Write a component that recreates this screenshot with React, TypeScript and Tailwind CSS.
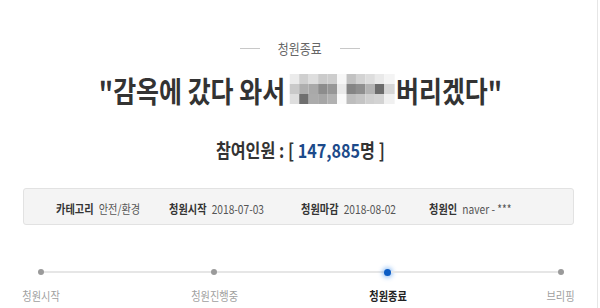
import React from 'react'

const mosaic = [
  ['#ebebeb', '#cfcfcf', '#dedede', '#cbcbcb', '#cdcdcd', '#f7f7f7', '#c2c2c2', '#d3d3d3', '#dddddd', '#e9e9e9', '#f4f4f4'],
  ['#c9c9c9', '#aeaeae', '#a9a9a9', '#8d8d8d', '#979797', '#eaeaea', '#858585', '#8f8f8f', '#b3b3b3', '#6c6c6c', '#d6d6d6'],
  ['#dedede', '#6f6f6f', '#ababab', '#a6a6a6', '#b1b1b1', '#fafafa', '#bdbdbd', '#c4c4c4', '#cfcfcf', '#d3d3d3', '#f0f0f0'],
]

const info = [
  { label: '카테고리', value: '안전/환경', w: 'w-[113px]' },
  { label: '청원시작', value: '2018-07-03', w: 'w-[132px]' },
  { label: '청원마감', value: '2018-08-02', w: 'w-[128px]' },
  { label: '청원인', value: 'naver - ***', w: 'w-[100px]' },
]

const steps = ['청원시작', '청원진행중', '청원종료', '브리핑']

function Dot({ active }: { active?: boolean }) {
  if (active) {
    return (
      <div className="w-[7px] h-[7px] rounded-full bg-[#0b5cc4] shadow-[0_0_4px_2px_rgba(60,140,235,0.45)] shrink-0" />
    )
  }
  return <div className="w-[6px] h-[6px] rounded-full bg-[#9a9a9a] shrink-0" />
}

export default function App() {
  return (
    <div className="w-[600px] h-[308px] bg-white flex overflow-hidden font-['Noto_Sans_CJK_KR',sans-serif]">
      <div className="w-[597px] pl-[3px] flex flex-col items-center">
        {/* status label */}
        <div className="mt-[38px] h-5 flex items-center gap-[14px]">
          <div className="w-[20px] h-px bg-[#c8c8c8]" />
          <span className="text-[14px] leading-5 text-[#666] scale-x-[0.85]">청원종료</span>
          <div className="w-[20px] h-px bg-[#c8c8c8]" />
        </div>

        {/* title */}
        <div className="mt-[14px] h-9 flex items-center scale-x-[0.86] text-[29px] leading-9 font-bold text-[#333]">
          <span>"감옥에 갔다 와서</span>
          <div className="ml-[5px] mr-[2px] grid grid-cols-11 w-[122px] -mt-[2px]">
            {mosaic.flat().map((c, i) => (
              <div key={i} className="h-[10px]" style={{ backgroundColor: c }} />
            ))}
          </div>
          <span>버리겠다"</span>
        </div>

        {/* count */}
        <div className="mt-[30px] h-6 text-[19px] leading-6 font-bold text-[#333] scale-x-[0.85] whitespace-pre">
          참여인원 : [ <span className="text-[#1c4a8a]">147,885</span>명 ]
        </div>

        {/* info box */}
        <div className="self-start ml-[20px] mt-[26px] w-[551px] h-[37px] border border-[#e2e2e2] bg-[#f4f4f4] rounded-[3px] flex items-center pl-[32px]">
          {info.map((it) => (
            <div key={it.label} className={`${it.w} shrink-0`}>
              <div className="inline-flex items-baseline gap-[6px] origin-left scale-x-[0.85] text-[12px] leading-4 whitespace-nowrap">
                <span className="font-bold text-[#333]">{it.label}</span>
                <span className="text-[#555]">{it.value}</span>
              </div>
            </div>
          ))}
        </div>

        {/* progress */}
        <div className="self-start ml-[8px] mt-[42px] w-[580px] flex flex-col">
          <div className="px-[27px] h-[10px] flex items-center">
            <Dot />
            <div className="flex-1 h-[2px] bg-[#e6e6e6]" />
            <Dot />
            <div className="flex-1 h-[2px] bg-[#e6e6e6]" />
            <Dot active />
            <div className="flex-1 h-[2px] bg-[#e6e6e6]" />
            <Dot />
          </div>
          <div className="mt-[11px] flex justify-between">
            {steps.map((s, i) => (
              <div key={s} className="w-[60px] flex justify-center">
                <span
                  className={
                    i === 2
                      ? 'text-[12px] leading-4 font-bold text-[#222] scale-x-[0.85] whitespace-nowrap'
                      : 'text-[12px] leading-4 text-[#a0a0a0] scale-x-[0.85] whitespace-nowrap'
                  }
                >
                  {s}
                </span>
              </div>
            ))}
          </div>
        </div>
      </div>
      <div className="w-px bg-[#e6e6e6]" />
    </div>
  )
}
